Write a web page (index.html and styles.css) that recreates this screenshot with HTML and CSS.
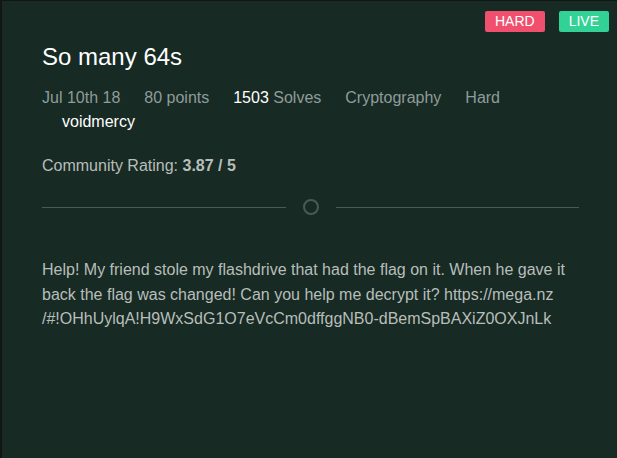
FILE: index.html
```html
<!DOCTYPE html>
<html>
<head>
<meta charset="utf-8">
<link rel="stylesheet" href="styles.css">
</head>
<body>
<div class="card">
  <div class="badges">
    <span class="label label-danger">Hard</span>
    <span class="label label-success">Live</span>
  </div>
  <h1 class="title">So many 64s</h1>
  <div class="meta">
    <span class="meta-item">Jul 10th 18</span>
    <span class="meta-item">80 points</span>
    <span class="meta-item"><span class="hl">1503</span> Solves</span>
    <span class="meta-item">Cryptography</span>
    <span class="meta-item">Hard</span>
  </div>
  <div class="author"><span class="author-icon"></span><span class="author-name">voidmercy</span></div>
  <div class="rating">Community Rating: <strong>3.87 / 5</strong></div>
  <div class="divider">
    <span class="divider-line"></span>
    <span class="divider-circle"></span>
    <span class="divider-line"></span>
  </div>
  <p class="desc">Help! My friend stole my flashdrive that had the flag on it. When he gave it back the flag was changed! Can you help me decrypt it? https://mega.nz /#!OHhUylqA!H9WxSdG1O7eVcCm0dffggNB0-dBemSpBAXiZ0OXJnLk</p>
</div>
</body>
</html>
```

FILE: styles.css
```css
html, body {
  margin: 0;
  padding: 0;
  background: #172a24;
}
body {
  font-family: "Liberation Sans", Arial, sans-serif;
  width: 617px;
  height: 458px;
  overflow: hidden;
}
.card {
  box-sizing: border-box;
  width: 617px;
  height: 458px;
  background: #172a24;
  border-left: 2px solid #121614;
  border-top: 1px solid #121614;
  padding: 10px 8px 0 40px;
}
.badges {
  display: flex;
  justify-content: flex-end;
  gap: 14px;
}
.label {
  display: inline-block;
  padding: 0 10px;
  font-size: 14px;
  line-height: 21px;
  border-radius: 2px;
  color: #fff;
  text-transform: uppercase;
}
.label-danger { background: #f0506e; }
.label-success { background: #32d296; }
.title {
  margin: 8px 0 0 0;
  font-size: 24px;
  font-weight: 400;
  line-height: 34px;
  color: #ffffff;
}
.meta {
  margin-top: 12px;
  display: flex;
  gap: 24px;
  font-size: 16px;
  line-height: 24px;
  color: #909c99;
}
.hl { color: #ffffff; }
.author {
  display: flex;
  font-size: 16px;
  line-height: 24px;
  color: #ffffff;
}
.author-icon {
  display: inline-block;
  width: 20px;
}
.rating {
  margin-top: 20px;
  font-size: 16px;
  line-height: 24px;
  color: #b8beba;
}
.rating strong { font-weight: 700; }
.divider {
  margin-top: 21px;
  width: 537px;
  display: flex;
  align-items: center;
  gap: 17px;
}
.divider-line {
  flex: 1;
  height: 1px;
  background: #4a5a54;
}
.divider-circle {
  box-sizing: border-box;
  width: 16px;
  height: 16px;
  border: 2px solid #4a5a54;
  border-radius: 50%;
}
.desc {
  margin: 43px 0 0 0;
  width: 540px;
  font-size: 16px;
  line-height: 24.5px;
  color: #b8beba;
}
```
